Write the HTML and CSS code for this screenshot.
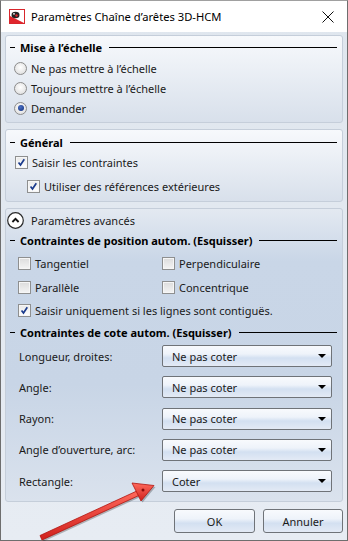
FILE: index.html
```html
<!DOCTYPE html>
<html lang="fr">
<head>
    <meta charset="UTF-8">
    <title>Paramètres Chaîne d'arêtes 3D-HCM</title>
    <link rel="stylesheet" href="styles.css">
</head>
<body>

    <div class="window">
        <!-- Title bar -->
        <div class="titlebar">
            <svg class="app-icon" width="16" height="15" viewBox="0 0 16 15">
                <rect x="0.5" y="0.5" width="15" height="14" fill="#fff" stroke="#d8262c"/>
                <polygon points="1,14 1,7 15,14" fill="#e0262d"/>
                <ellipse cx="6.5" cy="6" rx="4" ry="3.3" fill="#222"/>
                <circle cx="7.5" cy="6.5" r="1.2" fill="#e0262d"/>
                <circle cx="5" cy="4.8" r="0.9" fill="#fff"/>
            </svg>
            <span class="title">Paramètres Chaîne d’arêtes 3D-HCM</span>
            <svg class="close" width="12" height="12" viewBox="0 0 12 12">
                <path d="M0.5 0.5 L11.5 11.5 M11.5 0.5 L0.5 11.5" stroke="#111" stroke-width="1"/>
            </svg>
        </div>

        <div class="client">
            <!-- Mise à l'échelle -->
            <section class="panel panel-scale">
                <div class="group-title"><span class="dash"></span><span class="group-text">Mise à l’échelle</span><span class="rule"></span></div>
                <div class="option first"><span class="radio"></span>Ne pas mettre à l’échelle</div>
                <div class="option"><span class="radio"></span>Toujours mettre à l’échelle</div>
                <div class="option"><span class="radio checked"></span>Demander</div>
            </section>

            <!-- Général -->
            <section class="panel panel-general">
                <div class="group-title"><span class="dash"></span><span class="group-text">Général</span><span class="rule"></span></div>
                <div class="option check-row"><span class="checkbox checked"><svg viewBox="0 0 13 13"><path d="M3 6.5 L5.3 9.5 L9.8 2.6"/></svg></span>Saisir les contraintes</div>
                <div class="option check-row nested"><span class="checkbox checked"><svg viewBox="0 0 13 13"><path d="M3 6.5 L5.3 9.5 L9.8 2.6"/></svg></span>Utiliser des références extérieures</div>
            </section>

            <!-- Paramètres avancés -->
            <section class="panel panel-advanced">
                <div class="expander">
                    <span class="expander-btn"><svg width="17" height="17" viewBox="0 0 17 17"><circle cx="8.5" cy="8.5" r="7.8" fill="#fff" stroke="#2a2a2a" stroke-width="1.2"/><path d="M5.4 10 L8.5 6.8 L11.6 10" fill="none" stroke="#111" stroke-width="1.8"/></svg></span>
                    Paramètres avancés
                </div>

                <div class="group-title"><span class="dash"></span><span class="group-text">Contraintes de position autom. (Esquisser)</span><span class="rule"></span></div>
                <div class="check-grid">
                    <div class="option"><span class="checkbox"></span>Tangentiel</div>
                    <div class="option"><span class="checkbox"></span>Perpendiculaire</div>
                    <div class="option"><span class="checkbox"></span>Parallèle</div>
                    <div class="option"><span class="checkbox"></span>Concentrique</div>
                    <div class="option wide"><span class="checkbox checked"><svg viewBox="0 0 13 13"><path d="M3 6.5 L5.3 9.5 L9.8 2.6"/></svg></span>Saisir uniquement si les lignes sont contiguës.</div>
                </div>

                <div class="group-title"><span class="dash"></span><span class="group-text">Contraintes de cote autom. (Esquisser)</span><span class="rule"></span></div>
                <div class="combo-list">
                    <div class="combo-row"><span class="combo-label">Longueur, droites:</span><div class="combo">Ne pas coter<span class="caret"></span></div></div>
                    <div class="combo-row"><span class="combo-label">Angle:</span><div class="combo">Ne pas coter<span class="caret"></span></div></div>
                    <div class="combo-row"><span class="combo-label">Rayon:</span><div class="combo">Ne pas coter<span class="caret"></span></div></div>
                    <div class="combo-row"><span class="combo-label">Angle d’ouverture, arc:</span><div class="combo">Ne pas coter<span class="caret"></span></div></div>
                    <div class="combo-row"><span class="combo-label">Rectangle:</span><div class="combo">Coter<span class="caret"></span></div></div>
                </div>
            </section>

            <div class="buttons">
                <button class="btn">OK</button>
                <button class="btn">Annuler</button>
            </div>
        </div>

        <!-- Red annotation arrow -->
        <svg class="annotation" width="348" height="541" viewBox="0 0 348 541">
            <defs>
                <linearGradient id="arrowFill" x1="0" y1="0" x2="0" y2="1">
                    <stop offset="0" stop-color="#ff6a5c"/>
                    <stop offset="1" stop-color="#d0201c"/>
                </linearGradient>
            </defs>
            <g transform="translate(1.5,1.5)" opacity="0.25">
                <polygon points="40,535.5 139,490 141,494.5 42,540" fill="#000"/>
                <polygon points="132,483 154,485.5 141,501" fill="#000"/>
            </g>
            <polygon points="40,535.5 139,490 141,494.5 42,540" fill="url(#arrowFill)" stroke="#b0140f" stroke-width="0.8"/>
            <polygon points="132,483 154,485.5 141,501" fill="url(#arrowFill)" stroke="#b0140f" stroke-width="0.8"/>
            <circle cx="143" cy="490" r="1.5" fill="#8a0a08"/>
        </svg>
    </div>

</body>
</html>
```

FILE: styles.css
```css
* {
    margin: 0;
    padding: 0;
    box-sizing: border-box;
}

body {
    font-family: "Noto Sans", "Open Sans", sans-serif;
    font-size: 11px;
    color: #1a1a1a;
    background: #fff;
}

.window {
    position: relative;
    width: 348px;
    height: 541px;
    border: 1px solid #6e6e6e;
    border-top-color: #a0a0a0;
    display: flex;
    flex-direction: column;
    background: linear-gradient(#dfe6ee, #e7ecf3);
}

/* Title bar */
.titlebar {
    height: 31px;
    flex-shrink: 0;
    background: #fff;
    display: flex;
    align-items: center;
    padding-left: 8px;
}

.title {
    margin-left: 6px;
    font-size: 11.2px;
    color: #000;
}

.close {
    margin-left: auto;
    margin-right: 13px;
}

/* Client area */
.client {
    flex: 1;
    display: flex;
    flex-direction: column;
    gap: 6px;
    padding: 3px 4px 0;
}

.panel {
    border: 1px solid #c5ceda;
    border-radius: 3px;
    background: linear-gradient(#f7f9fc, #d8e0eb);
    padding: 0 5px 0 0;
}

.panel-scale {
    height: 88px;
    padding-top: 1px;
}

.panel-general {
    height: 73px;
    padding-top: 2px;
}

.panel-advanced {
    height: 294px;
    background: linear-gradient(#e3e9f1, #c9d6e7 18%, #c8d5e6 60%, #dae2ed);
}

.group-title {
    display: flex;
    align-items: center;
    height: 20px;
}

.dash {
    width: 5px;
    height: 1px;
    background: #000;
    margin-left: 4px;
    margin-right: 5px;
}

.group-text {
    font-weight: 700;
    color: #000;
}

.rule {
    flex: 1;
    height: 1px;
    background: #000;
    margin-left: 7px;
}

.option {
    display: flex;
    align-items: center;
    height: 20px;
    padding-left: 8px;
}

.option.first {
    margin-top: 1px;
}

/* Radio buttons */
.radio {
    width: 13px;
    height: 13px;
    border-radius: 50%;
    border: 1px solid #8c8c8c;
    background: radial-gradient(circle at 50% 40%, #ffffff, #e4e4e4 70%, #d2d2d2);
    margin-right: 4px;
    display: flex;
    align-items: center;
    justify-content: center;
}

.radio.checked::after {
    content: "";
    width: 6px;
    height: 6px;
    border-radius: 50%;
    background: radial-gradient(circle at 40% 35%, #4c70c4, #0f2f7a);
}

/* Checkboxes */
.checkbox {
    width: 13px;
    height: 13px;
    border: 1px solid #8e8f8f;
    background: linear-gradient(#dcdcdc, #f4f4f4);
    box-shadow: inset 0 0 0 1px #f6f6f6;
    margin-right: 4px;
    display: flex;
}

.checkbox.checked {
    background: linear-gradient(#e8e8e8, #ffffff);
}

.checkbox svg {
    width: 11px;
    height: 11px;
}

.checkbox path {
    fill: none;
    stroke: #1b3b8c;
    stroke-width: 2;
}

.check-row {
    padding-left: 9px;
}

.check-row.nested {
    padding-left: 21px;
    margin-top: 4px;
}

/* Advanced */
.expander {
    display: flex;
    align-items: center;
    height: 21px;
    padding-top: 1px;
    color: #1a1a1a;
}

.expander-btn {
    display: flex;
    margin-left: 1px;
    margin-right: 7px;
}

.check-grid {
    display: grid;
    grid-template-columns: 156px 1fr;
    row-gap: 4px;
    padding-top: 3px;
    margin-bottom: 2px;
}

.check-grid .option {
    padding-left: 12px;
}

.check-grid .option:nth-child(even) {
    padding-left: 0;
}

.check-grid .wide {
    grid-column: 1 / 3;
    margin-top: -1px;
}

.combo-list {
    display: flex;
    flex-direction: column;
    gap: 9.25px;
    padding-top: 3px;
}

.combo-row {
    display: flex;
    align-items: center;
    height: 22px;
}

.combo-label {
    width: 156px;
    padding-left: 13px;
    flex-shrink: 0;
}

.combo {
    position: relative;
    width: 170px;
    height: 22px;
    border: 1px solid #6f7378;
    border-radius: 2px;
    background: linear-gradient(#f8fafd, #eef3fa 40%, #d3e0f1 60%, #e3eaf5);
    display: flex;
    align-items: center;
    padding-left: 9px;
    color: #1a1a1a;
}

.caret {
    position: absolute;
    right: 5px;
    top: 8px;
    width: 0;
    height: 0;
    border-left: 4px solid transparent;
    border-right: 4px solid transparent;
    border-top: 4px solid #000;
}

/* Buttons */
.buttons {
    display: flex;
    justify-content: flex-end;
    gap: 8px;
    margin-top: 1px;
}

.btn {
    width: 81px;
    height: 24px;
    border: 1px solid #6f7378;
    border-radius: 3px;
    background: linear-gradient(#f8fafd, #eef3fa 40%, #d3e0f1 60%, #e3eaf5);
    font-family: "Noto Sans", "Open Sans", sans-serif;
    font-size: 11px;
    color: #1a1a1a;
}

.btn + .btn {
    width: 80px;
}

.annotation {
    position: absolute;
    left: -1px;
    top: -1px;
    pointer-events: none;
}
```
